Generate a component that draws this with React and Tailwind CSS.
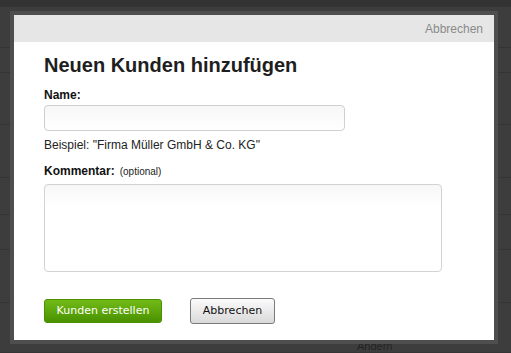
import React from 'react';

// dimmed app rows behind the dialog
const rows = [7, 41, 25, 52, 53, 37, 35, 53, 50];

const Backdrop = () => (
  <div className="flex flex-col">
    {rows.map((h, i) => (
      <div
        key={i}
        className={i === 0 ? 'bg-[#333333]' : 'border-b border-[#353535] bg-[#3d3d3d]'}
        style={{ height: h }}
      />
    ))}
  </div>
);

const App = () => {
  return (
    <div className="relative h-[353px] w-[511px] overflow-hidden bg-[#3d3d3d] font-['Liberation_Sans',Arial,sans-serif]">
      <Backdrop />
      <div className="absolute left-[357px] top-[338px] text-[11px] text-[#222]">Ändern</div>

      {/* Modal */}
      <div className="absolute left-[10px] top-[11px] w-[488px] border-4 border-[#4e4e4e]">
        <div className="flex h-[325px] flex-col bg-white">
          <div className="flex h-[27px] items-center justify-end bg-[#e6e6e6] pr-[11px] text-[12px] text-[#8a8a8a]">
            Abbrechen
          </div>

          <div className="flex flex-col pl-[30px]">
            <h2 className="mt-[11px] text-[20px] font-bold leading-[24px] text-[#1e1e1e]">
              Neuen Kunden hinzufügen
            </h2>

            <label className="mt-[11px] text-[12px] font-bold leading-[14px] text-[#111]">Name:</label>
            <input
              type="text"
              className="mt-[3px] h-[26px] w-[301px] rounded-[4px] border border-[#cfcfcf] bg-gradient-to-b from-[#f7f7f7] to-white outline-none"
            />
            <p className="mt-[7px] text-[12px] leading-[14px] text-[#222]">
              Beispiel: "Firma Müller GmbH &amp; Co. KG"
            </p>

            <div className="mt-[12px] flex items-baseline gap-[5px] leading-[14px]">
              <span className="text-[12px] font-bold text-[#111]">Kommentar:</span>
              <span className="text-[10px] text-[#222]">(optional)</span>
            </div>
            <textarea className="mt-[5px] h-[88px] w-[398px] resize-none rounded-[4px] border border-[#d2d2d2] bg-[linear-gradient(to_bottom,#f7f7f7,#ffffff_22px)] outline-none" />

            <div className="mt-[26px] flex items-center gap-[28px] font-['DejaVu_Sans',Verdana,sans-serif]">
              <button className="h-[24px] w-[118px] rounded-[3px] border border-[#4a8f05] bg-gradient-to-b from-[#72bb17] to-[#4a9200] text-[11px] text-white">
                Kunden erstellen
              </button>
              <button className="h-[26px] w-[85px] rounded-[3px] border border-[#7a7a7a] bg-gradient-to-b from-[#fbfbfb] to-[#d9d9d9] text-[11px] text-[#111]">
                Abbrechen
              </button>
            </div>
          </div>
        </div>
      </div>
    </div>
  );
};

export default App;
